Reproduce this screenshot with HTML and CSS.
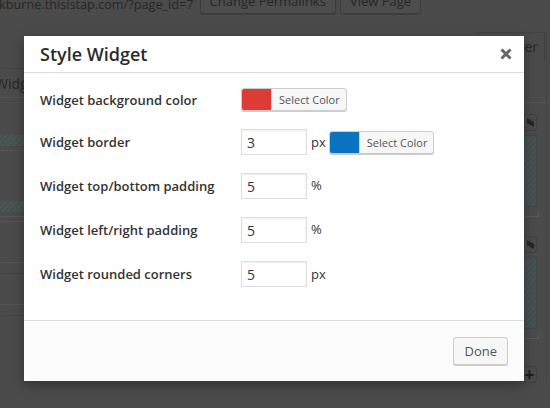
FILE: index.html
```html
<!DOCTYPE html>
<html lang="en">
<head>
  <meta charset="UTF-8" />
  <meta name="viewport" content="width=device-width, initial-scale=1.0" />
  <title>Style Widget</title>
  <link rel="stylesheet" href="styles.css">
</head>
<body>
  <!-- dimmed editor behind the dialog -->
  <div class="page">
    <div class="permalink">
      <span class="url">kburne.thisistap.com/?page_id=7</span>
      <button class="bg-btn">Change Permalinks</button>
      <button class="bg-btn">View Page</button>
    </div>
    <div class="editor">
      <div class="area-left">
        <div class="tabs"></div>
        <div class="area-title">Widgets</div>
        <div class="slot first"></div>
        <div class="slot"></div>
        <div class="rule r1"></div>
        <div class="rule r2"></div>
        <div class="rule r3"></div>
        <div class="rule r4"></div>
        <div class="rule r5"></div>
      </div>
      <div class="area-right">
        <div class="tab">Header</div>
        <div class="rule-right"></div>
        <div class="handle"><span></span></div>
        <div class="drop"></div>
        <div class="tick"></div>
        <div class="handle"><span></span></div>
        <div class="drop"></div>
        <div class="tick"></div>
        <div class="plus">+</div>
      </div>
    </div>
  </div>

  <div class="modal">
    <div class="modal-head">
      <h2 class="modal-title">Style Widget</h2>
      <svg class="close" width="12" height="12" viewBox="0 0 12 12">
        <path d="M1.5 1.5 L10.5 10.5 M10.5 1.5 L1.5 10.5" stroke="#666" stroke-width="3" stroke-linecap="butt" />
      </svg>
    </div>
    <div class="modal-body">
      <div class="field short">
        <label class="field-label">Widget background color</label>
        <button class="color-btn"><span class="swatch red"></span><span class="color-label">Select Color</span></button>
      </div>
      <div class="field">
        <label class="field-label">Widget border</label>
        <input class="num" type="text" value="3">
        <span class="unit">px</span>
        <button class="color-btn"><span class="swatch blue"></span><span class="color-label">Select Color</span></button>
      </div>
      <div class="field">
        <label class="field-label">Widget top/bottom padding</label>
        <input class="num" type="text" value="5">
        <span class="unit up">%</span>
      </div>
      <div class="field">
        <label class="field-label">Widget left/right padding</label>
        <input class="num" type="text" value="5">
        <span class="unit up">%</span>
      </div>
      <div class="field">
        <label class="field-label">Widget rounded corners</label>
        <input class="num" type="text" value="5">
        <span class="unit">px</span>
      </div>
    </div>
    <div class="modal-foot">
      <button class="done">Done</button>
    </div>
  </div>
</body>
</html>
```

FILE: styles.css
```css
body {
  margin: 0;
  background: #4b4b4b;
  font-family: "Open Sans", Arial, sans-serif;
  overflow: hidden;
  height: 408px;
}

/* background page */
.page {
  color: #262626;
}
.permalink {
  display: flex;
  align-items: flex-start;
  margin-top: -11px;
  height: 25px;
}
.url {
  font-size: 12.7px;
  line-height: 18px;
  padding-top: 6px;
  margin-left: -1px;
  margin-right: 6px;
  white-space: nowrap;
}
.bg-btn {
  height: 25px;
  padding: 0 9px;
  margin-right: 4px;
  font-family: "Open Sans", Arial, sans-serif;
  font-size: 13px;
  line-height: 21px;
  color: #262626;
  background: #4d4d4d;
  border: 1px solid #3c3c3c;
  border-radius: 3px;
  box-shadow: 0 1px 0 #3f3f3f;
}
.editor {
  display: flex;
  margin-top: 18px;
}
.area-left {
  width: 300px;
}
.tabs {
  height: 36px;
  border-bottom: 1px solid #444;
}
.area-title {
  height: 28px;
  line-height: 30px;
  font-size: 14px;
  margin-left: -5px;
  border-bottom: 1px solid #565656;
}
.slot {
  height: 11px;
  background: repeating-linear-gradient(135deg, #4b5656 0 2px, #465050 2px 4px);
  border-bottom: 4px solid #4b4b4b;
  box-shadow: 0 1px 0 #575757;
  margin-top: 51px;
}
.slot.first {
  margin-top: 37px;
}
.rule {
  height: 1px;
  background: #555;
}
.r1 { margin-top: 5px; }
.r2 { margin-top: 40px; }
.r3 { margin-top: 10px; background: #434343; }
.r4 { margin-top: 30px; }
.r5 { margin-top: 10px; background: #434343; }

.area-right {
  margin-left: auto;
  width: 60px;
  margin-right: 3px;
  border-right: 1px solid #444;
  display: flex;
  flex-direction: column;
  align-items: flex-end;
  padding-right: 9px;
  box-sizing: border-box;
}
.tab {
  height: 30px;
  line-height: 28px;
  font-size: 14px;
  padding: 0 6px 0 12px;
  border: 1px solid #414141;
  border-bottom: none;
  margin-right: -8px;
  box-sizing: border-box;
}
.rule-right {
  align-self: stretch;
  height: 1px;
  background: #555;
  margin: 40px -9px 0 0;
}
.handle {
  width: 14px;
  height: 17px;
  border: 1px solid #414141;
  border-radius: 3px;
  margin-top: 11px;
  display: flex;
  align-items: center;
  justify-content: center;
  box-sizing: border-box;
}
.handle span {
  width: 7px;
  height: 5px;
  background: #262626;
  transform: skewY(30deg);
}
.drop {
  width: 40px;
  height: 72px;
  margin-top: 4px;
  background: repeating-linear-gradient(135deg, #495454 0 2px, #444f4f 2px 4px);
  border: 1px solid #3d4849;
  box-sizing: border-box;
}
.tick {
  width: 30px;
  height: 5px;
  margin: 4px -2px 0 0;
  border-right: 1px solid #5a5a5a;
  border-bottom: 1px solid #5a5a5a;
}
.tick + .handle {
  margin-top: 19px;
}
.handle + .drop + .tick + .plus {
  margin-top: 27px;
}
.plus {
  width: 15px;
  height: 17px;
  line-height: 15px;
  text-align: center;
  font-size: 18px;
  font-weight: 700;
  color: #1e1e1e;
  border: 1px solid #414141;
  border-radius: 3px;
  box-sizing: border-box;
}

/* dialog */
.modal {
  position: absolute;
  left: 24px;
  top: 36px;
  width: 500px;
  background: #fff;
  box-shadow: 0 4px 12px rgba(0, 0, 0, 0.35);
  color: #333;
}
.modal-head {
  height: 36px;
  border-bottom: 1px solid #dddddd;
  display: flex;
  align-items: center;
  justify-content: space-between;
  padding: 0 12px 0 16px;
}
.modal-title {
  margin: 0;
  font-size: 18px;
  font-weight: 600;
  color: #2b2b2b;
}
.close {
  display: block;
}
.modal-body {
  display: flex;
  flex-direction: column;
  gap: 18px;
  padding: 15px 16px 33px;
}
.field {
  display: flex;
  align-items: center;
  height: 26px;
}
.field.short {
  height: 23px;
}
.field-label {
  width: 201px;
  flex: none;
  font-size: 13px;
  font-weight: 600;
  color: #333;
}
.num {
  width: 66px;
  height: 26px;
  box-sizing: border-box;
  margin: 0;
  padding: 0 5px;
  border: 1px solid #dddddd;
  box-shadow: inset 0 1px 2px rgba(0, 0, 0, 0.07);
  font-family: "Open Sans", Arial, sans-serif;
  font-size: 14px;
  color: #32373c;
  outline: none;
}
.unit {
  font-size: 13px;
  margin: 0 3px 0 4px;
  color: #333;
}
.unit.up {
  margin-top: -3px;
}
.color-btn {
  display: flex;
  height: 23px;
  padding: 0;
  border: 1px solid #cccccc;
  border-radius: 3px;
  background: #f7f7f7;
  box-shadow: 0 1px 0 #cccccc;
  overflow: hidden;
  box-sizing: border-box;
  cursor: pointer;
}
.swatch {
  width: 29px;
  height: 100%;
  border-right: 1px solid #d8d8d8;
}
.swatch.red { background: #dd3b36; }
.swatch.blue { background: #0b72bf; }
.color-label {
  padding: 0 6px 0 7px;
  font-family: "Open Sans", Arial, sans-serif;
  font-size: 11px;
  line-height: 21px;
  color: #555;
}
.modal-foot {
  height: 60px;
  border-top: 1px solid #dddddd;
  background: #fcfcfc;
  display: flex;
  align-items: center;
  justify-content: flex-end;
  padding-right: 16px;
}
.done {
  height: 28px;
  padding: 0 10px;
  border: 1px solid #cccccc;
  border-radius: 3px;
  background: #f7f7f7;
  box-shadow: 0 1px 0 #cccccc;
  font-family: "Open Sans", Arial, sans-serif;
  font-size: 13px;
  color: #555;
}
```
